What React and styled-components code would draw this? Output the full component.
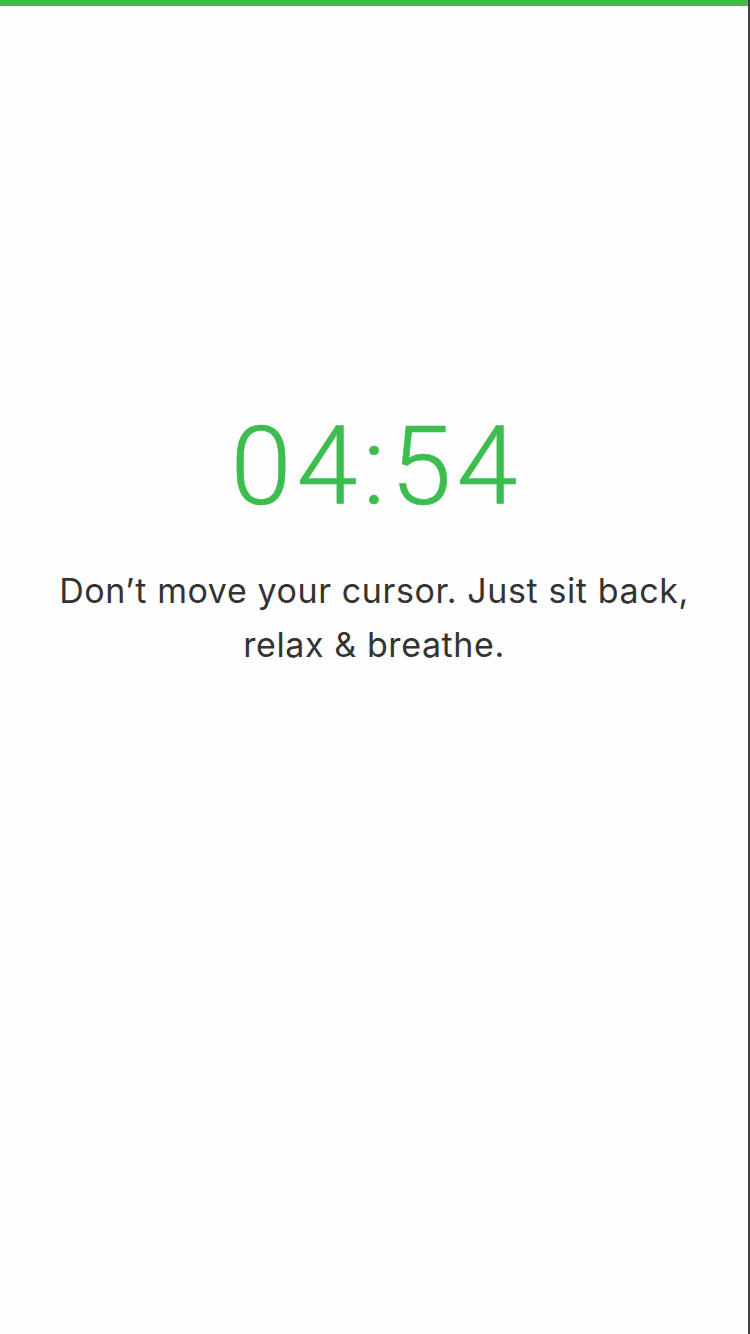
import React from "react";
import styled, { createGlobalStyle } from "styled-components";

const GlobalStyle = createGlobalStyle`
  html, body {
    margin: 0;
    padding: 0;
    background: #fefefe;
  }
  * {
    box-sizing: border-box;
  }
`;

const Page = styled.div`
  width: 750px;
  height: 1334px;
  background: #fefefe;
  border-right: 2px solid #3f3f3f;
  display: flex;
  flex-direction: column;
`;

const ProgressBar = styled.div`
  height: 6px;
  background: #3cbd4e;
`;

const Content = styled.div`
  display: flex;
  flex-direction: column;
  align-items: center;
  padding-top: 396px;
`;

const Timer = styled.div`
  font-family: Roboto, "Liberation Sans", sans-serif;
  font-size: 110px;
  font-weight: 300;
  line-height: 130px;
  color: #3cbd4e;
  letter-spacing: 5px;
  margin-right: -5px;
  -webkit-text-stroke: 0.6px #3cbd4e;
`;

const Message = styled.p`
  margin: 32px 0 0;
  width: 680px;
  text-align: center;
  font-family: Inter, "Liberation Sans", sans-serif;
  font-size: 34px;
  line-height: 54px;
  letter-spacing: 0.6px;
  color: #333333;
`;

const App = () => {
  return (
    <>
      <GlobalStyle />
      <Page>
        <ProgressBar />
        <Content>
          <Timer>04:54</Timer>
          <Message>Don’t move your cursor. Just sit back, relax &amp; breathe.</Message>
        </Content>
      </Page>
    </>
  );
};

export default App;
